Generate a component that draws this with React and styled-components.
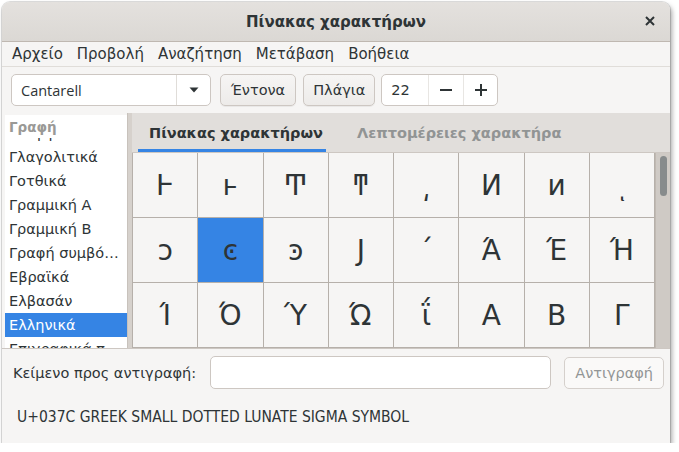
import styled, { createGlobalStyle } from "styled-components";

const GlobalStyle = createGlobalStyle`
  html, body {
    margin: 0;
    padding: 0;
    background: #ffffff;
  }
  body {
    font-family: "DejaVu Sans", "Noto Sans", sans-serif;
    color: #2e3436;
  }
`;

const Window = styled.div`
  margin: 2px 0 0 2px;
  width: 668px;
  height: 441px;
  display: flex;
  flex-direction: column;
  background: #f6f5f4;
  border-radius: 8px 8px 0 0;
  box-shadow: 2px 3px 5px rgba(0, 0, 0, 0.35), 0 0 0 1px rgba(0, 0, 0, 0.12);
  overflow: hidden;
`;

const TitleBar = styled.div`
  height: 39px;
  flex: none;
  display: flex;
  align-items: center;
  justify-content: center;
  position: relative;
  background: linear-gradient(#e4e1de, #dbd8d4);
  border-bottom: 1px solid #bfb8b1;
  font-weight: bold;
  font-size: 15px;
  color: #2e3436;
`;

const CloseButton = styled.span`
  position: absolute;
  right: 12px;
  top: 11px;
  width: 16px;
  height: 16px;
  display: flex;
  align-items: center;
  justify-content: center;
`;

const MenuBar = styled.div`
  height: 24px;
  flex: none;
  display: flex;
  align-items: center;
  padding-left: 3px;
  border-bottom: 1px solid #e0ddd9;
  font-size: 15px;
`;

const MenuItem = styled.span`
  padding: 0 7px;
`;

const Toolbar = styled.div`
  height: 46px;
  flex: none;
  display: flex;
  align-items: center;
  padding: 0 9px;
  gap: 7px;
`;

const Combo = styled.div`
  width: 200px;
  height: 32px;
  display: flex;
  border: 1px solid #cdc7c2;
  border-radius: 5px;
  background: #ffffff;
  box-sizing: border-box;
  overflow: hidden;
  margin-right: 2px;
`;

const ComboText = styled.div`
  flex: 1;
  display: flex;
  align-items: center;
  padding-left: 9px;
  font-family: "Open Sans", "DejaVu Sans", sans-serif;
  font-size: 14.5px;
`;

const ComboArrow = styled.div`
  width: 33px;
  border-left: 1px solid #e0ddd9;
  display: flex;
  align-items: center;
  justify-content: center;
`;

const Button = styled.div`
  height: 32px;
  flex: none;
  box-sizing: border-box;
  padding: 0 ${(p) => p.$pad || 10}px;
  display: flex;
  align-items: center;
  border: 1px solid #cdc7c2;
  border-radius: 5px;
  background: linear-gradient(#f6f5f4, #edebe9);
  font-size: 14.5px;
  white-space: nowrap;
  color: ${(p) => (p.$disabled ? "#929595" : "#2e3436")};
  box-shadow: ${(p) => (p.$disabled ? "none" : "0 1px 0 rgba(0,0,0,0.05)")};
  ${(p) => p.$disabled && "background: #faf9f8; border-color: #d5d0cc;"}
`;

const Spin = styled.div`
  width: 117px;
  height: 32px;
  box-sizing: border-box;
  display: flex;
  border: 1px solid #cdc7c2;
  border-radius: 5px;
  background: #ffffff;
  overflow: hidden;
  margin-left: -1px;
`;

const SpinValue = styled.div`
  width: 46px;
  display: flex;
  align-items: center;
  padding-left: 9px;
  box-sizing: border-box;
  font-size: 14.5px;
`;

const SpinButton = styled.div`
  flex: 1;
  display: flex;
  align-items: center;
  justify-content: center;
  border-left: 1px solid #e8e6e3;
`;

const Body = styled.div`
  height: 235px;
  flex: none;
  display: flex;
`;

const Sidebar = styled.div`
  width: 123px;
  margin-left: 3px;
  margin-top: 2px;
  background: #ffffff;
  position: relative;
  overflow: hidden;
`;

const ListHeader = styled.div`
  position: absolute;
  top: 0;
  left: 0;
  right: 0;
  height: 23px;
  padding-left: 4px;
  display: flex;
  align-items: center;
  background: #ffffff;
  font-weight: bold;
  font-size: 13.5px;
  color: #9a9996;
  z-index: 1;
`;

const List = styled.div`
  padding-top: 6px;
  display: flex;
  flex-direction: column;
`;

const ListItem = styled.div`
  height: 24px;
  flex: none;
  display: flex;
  align-items: center;
  padding-left: 4px;
  font-size: 14.5px;
  white-space: nowrap;
  background: ${(p) => (p.$selected ? "#3584e4" : "transparent")};
  color: ${(p) => (p.$selected ? "#ffffff" : "#2e3436")};
`;

const Pane = styled.div`
  width: 4px;
  background: #d6d1cc;
  border-left: 1px solid #c8c2bc;
`;

const Notebook = styled.div`
  flex: 1;
  display: flex;
  flex-direction: column;
  background: #e1dedb;
`;

const Tabs = styled.div`
  height: 39px;
  flex: none;
  display: flex;
  align-items: stretch;
  padding-left: 6px;
  gap: 19px;
  border-bottom: 1px solid #cdc7c2;
`;

const Tab = styled.div`
  display: flex;
  align-items: center;
  padding: ${(p) => (p.$active ? "0 3px 0 11px" : "0 12px")};
  font-weight: bold;
  font-size: 14.5px;
  white-space: nowrap;
  color: ${(p) => (p.$active ? "#2e3436" : "#919494")};
  box-shadow: ${(p) => (p.$active ? "inset 0 -3px 0 #3584e4" : "none")};
`;

const GridArea = styled.div`
  flex: 1;
  display: flex;
  overflow: hidden;
`;

const CharGrid = styled.div`
  width: 523px;
  display: grid;
  grid-template-columns: repeat(8, 1fr);
  grid-auto-rows: 65px;
  background: #f6f5f4;
  border-left: 1px solid #b6b0aa;
  box-sizing: border-box;
`;

const Cell = styled.div`
  display: flex;
  align-items: center;
  justify-content: center;
  border-right: 1px solid #b6b0aa;
  border-bottom: 1px solid #b6b0aa;
  font-size: 28px;
  background: ${(p) => (p.$selected ? "#3584e4" : "transparent")};
  color: #2e3436;
`;

const Scrollbar = styled.div`
  flex: 1;
  background: #cfcac5;
  border-left: 1px solid #c0b9b2;
  padding: 3px 3px 0 4px;
`;

const Slider = styled.div`
  width: 7px;
  height: 40px;
  border-radius: 4px;
  background: #878b8c;
`;

const Footer = styled.div`
  flex: 1;
  display: flex;
  flex-direction: column;
  border-top: 1px solid #cdc7c2;
`;

const CopyRow = styled.div`
  display: flex;
  align-items: center;
  padding: 7px 6px 0 10px;
  gap: 13px;
  font-size: 14.5px;
`;

const CopyLabel = styled.span`
  flex: none;
  white-space: nowrap;
  padding-left: 1px;
  margin-right: 1px;
`;

const Entry = styled.div`
  flex: 1;
  height: 33px;
  box-sizing: border-box;
  background: #ffffff;
  border: 1px solid #cdc7c2;
  border-radius: 5px;
`;

const Status = styled.div`
  padding: 19px 0 0 15px;
  font-family: "DejaVu Sans Condensed", "DejaVu Sans", sans-serif;
  font-stretch: condensed;
  font-size: 15.5px;
`;

const scripts = [
  "Γεωργιανά",
  "Γλαγολιτικά",
  "Γοτθικά",
  "Γραμμική Α",
  "Γραμμική Β",
  "Γραφή συμβό…",
  "Εβραϊκά",
  "Ελβασάν",
  "Ελληνικά",
  "Επιγραφικά π",
];

const chars = [
  "Ͱ", "ͱ", "Ͳ", "ͳ", "͵", "Ͷ", "ͷ", "ͺ",
  "ͻ", "ͼ", "ͽ", "Ϳ", "΄", "Ά", "Έ", "Ή",
  "Ί", "Ό", "Ύ", "Ώ", "ΐ", "Α", "Β", "Γ",
];

const App = () => {
  return (
    <>
      <GlobalStyle />
      <Window>
        <TitleBar>
          Πίνακας χαρακτήρων
          <CloseButton>
            <svg width="10" height="10" viewBox="0 0 10 10">
              <path d="M1 1L9 9M9 1L1 9" stroke="#2e3436" strokeWidth="2" />
            </svg>
          </CloseButton>
        </TitleBar>
        <MenuBar>
          <MenuItem>Αρχείο</MenuItem>
          <MenuItem>Προβολή</MenuItem>
          <MenuItem>Αναζήτηση</MenuItem>
          <MenuItem>Μετάβαση</MenuItem>
          <MenuItem>Βοήθεια</MenuItem>
        </MenuBar>
        <Toolbar>
          <Combo>
            <ComboText>Cantarell</ComboText>
            <ComboArrow>
              <svg width="10" height="6" viewBox="0 0 10 6">
                <path d="M0.5 0.5H9.5L5 5.5Z" fill="#2e3436" />
              </svg>
            </ComboArrow>
          </Combo>
          <Button>Έντονα</Button>
          <Button $pad={9}>Πλάγια</Button>
          <Spin>
            <SpinValue>22</SpinValue>
            <SpinButton>
              <svg width="12" height="2" viewBox="0 0 12 2">
                <rect width="12" height="2" fill="#2e3436" />
              </svg>
            </SpinButton>
            <SpinButton>
              <svg width="12" height="12" viewBox="0 0 12 12">
                <rect y="5" width="12" height="2" fill="#2e3436" />
                <rect x="5" width="2" height="12" fill="#2e3436" />
              </svg>
            </SpinButton>
          </Spin>
        </Toolbar>
        <Body>
          <Sidebar>
            <ListHeader>Γραφή</ListHeader>
            <List>
              {scripts.map((s) => (
                <ListItem key={s} $selected={s === "Ελληνικά"}>
                  {s}
                </ListItem>
              ))}
            </List>
          </Sidebar>
          <Pane />
          <Notebook>
            <Tabs>
              <Tab $active>Πίνακας χαρακτήρων</Tab>
              <Tab>Λεπτομέρειες χαρακτήρα</Tab>
            </Tabs>
            <GridArea>
              <CharGrid>
                {chars.map((c, i) => (
                  <Cell key={i} $selected={i === 9}>
                    {c}
                  </Cell>
                ))}
              </CharGrid>
              <Scrollbar>
                <Slider />
              </Scrollbar>
            </GridArea>
          </Notebook>
        </Body>
        <Footer>
          <CopyRow>
            <CopyLabel>Κείμενο προς αντιγραφή:</CopyLabel>
            <Entry />
            <Button $disabled $pad={10}>
              Αντιγραφή
            </Button>
          </CopyRow>
          <Status>U+037C GREEK SMALL DOTTED LUNATE SIGMA SYMBOL</Status>
        </Footer>
      </Window>
    </>
  );
};

export default App;
